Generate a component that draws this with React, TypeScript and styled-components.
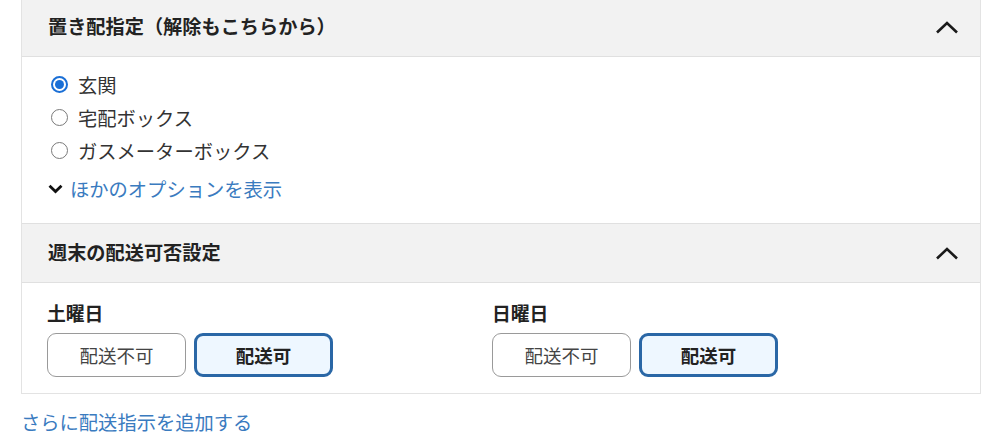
import React from "react";
import styled, { createGlobalStyle } from "styled-components";

const Global = createGlobalStyle`
  html, body { margin: 0; padding: 0; background: #fff; }
  body {
    font-family: "Noto Sans CJK JP", "Noto Sans", sans-serif;
    color: #333;
    overflow: hidden;
  }
`;

const Page = styled.div`
  width: 999px;
  height: 435px;
  padding-left: 21px;
  box-sizing: border-box;
  overflow: hidden;
`;

const Panel = styled.div`
  width: 960px;
  box-sizing: border-box;
  margin-top: -3px;
  border: 1px solid #e3e3e3;
  background: #fff;
`;

const Header = styled.div<{ $top?: boolean }>`
  height: 58px;
  display: flex;
  align-items: center;
  justify-content: space-between;
  background: #f2f2f2;
  padding: 0 21px 0 26px;
  border-top: ${(p) => (p.$top ? "none" : "1px solid #e0e0e0")};
  border-bottom: 1px solid #e0e0e0;
`;

const HeaderTitle = styled.div`
  font-size: 19.2px;
  font-weight: 700;
  color: #222;
  line-height: 24px;
  margin-top: -3px;
`;

const Chevron = styled.svg`
  width: 24px;
  height: 14px;
  display: block;
`;

const Body = styled.div`
  padding: 11px 26px 18px 26px;
`;

const RadioRow = styled.label`
  height: 33px;
  display: flex;
  align-items: center;
  font-size: 19.3px;
  color: #333;
  cursor: pointer;
`;

const RadioCircle = styled.span<{ $checked?: boolean }>`
  flex: 0 0 auto;
  width: 17px;
  height: 17px;
  box-sizing: border-box;
  border-radius: 50%;
  margin: 0 10px 0 3px;
  border: ${(p) => (p.$checked ? "2px solid #1a6fd6" : "1.5px solid #7a7a7a")};
  display: flex;
  align-items: center;
  justify-content: center;
  &::after {
    content: "";
    display: ${(p) => (p.$checked ? "block" : "none")};
    width: 9px;
    height: 9px;
    border-radius: 50%;
    background: #1a6fd6;
  }
`;

const MoreRow = styled.div`
  height: 33px;
  margin-top: 5px;
  display: flex;
  align-items: center;
  font-size: 19.3px;
`;

const SmallChevron = styled.svg`
  flex: 0 0 auto;
  width: 15px;
  height: 10px;
  margin-right: 7px;
  display: block;
`;

const LinkText = styled.a`
  color: #3a7bbf;
  text-decoration: none;
  cursor: pointer;
`;

const WeekendBody = styled.div`
  padding: 18px 26px 16px 25px;
  display: grid;
  grid-template-columns: 445px 445px;
`;

const DayColumn = styled.div`
  display: flex;
  flex-direction: column;
  gap: 8px;
`;

const DayLabel = styled.div`
  font-size: 18.8px;
  font-weight: 700;
  color: #222;
  line-height: 24px;
`;

const ButtonRow = styled.div`
  display: flex;
  gap: 8px;
`;

const Toggle = styled.button<{ $active?: boolean }>`
  width: 139px;
  height: 44px;
  box-sizing: border-box;
  border-radius: 9px;
  font-family: "Noto Sans CJK JP", "Noto Sans", sans-serif;
  font-size: 18.5px;
  font-weight: ${(p) => (p.$active ? 700 : 400)};
  color: ${(p) => (p.$active ? "#222" : "#444")};
  background: ${(p) => (p.$active ? "#eef7ff" : "#fff")};
  border: ${(p) => (p.$active ? "3px solid #2a67a6" : "1px solid #9a9a9a")};
  cursor: pointer;
  padding: 0;
`;

const AddLink = styled.a`
  display: block;
  margin-top: 16px;
  font-size: 19.3px;
  line-height: 24px;
  color: #3a7bbf;
  text-decoration: none;
`;

const UpIcon = () => (
  <Chevron viewBox="0 0 24 14">
    <path d="M2 12.5 L12 3 L22 12.5" fill="none" stroke="#1a1a1a" strokeWidth="2.6" strokeLinejoin="miter" />
  </Chevron>
);

const days = [{ name: "土曜日" }, { name: "日曜日" }];

const options = [
  { label: "玄関", checked: true },
  { label: "宅配ボックス", checked: false },
  { label: "ガスメーターボックス", checked: false },
];

export default function App() {
  return (
    <>
      <Global />
      <Page>
        <Panel>
          <Header $top>
            <HeaderTitle>置き配指定（解除もこちらから）</HeaderTitle>
            <UpIcon />
          </Header>
          <Body>
            {options.map((o) => (
              <RadioRow key={o.label}>
                <RadioCircle $checked={o.checked} />
                {o.label}
              </RadioRow>
            ))}
            <MoreRow>
              <SmallChevron viewBox="0 0 15 10">
                <path d="M1.5 1.8 L7.5 7.6 L13.5 1.8" fill="none" stroke="#111" strokeWidth="2.8" />
              </SmallChevron>
              <LinkText>ほかのオプションを表示</LinkText>
            </MoreRow>
          </Body>
          <Header>
            <HeaderTitle>週末の配送可否設定</HeaderTitle>
            <UpIcon />
          </Header>
          <WeekendBody>
            {days.map((d) => (
              <DayColumn key={d.name}>
                <DayLabel>{d.name}</DayLabel>
                <ButtonRow>
                  <Toggle>配送不可</Toggle>
                  <Toggle $active>配送可</Toggle>
                </ButtonRow>
              </DayColumn>
            ))}
          </WeekendBody>
        </Panel>
        <AddLink>さらに配送指示を追加する</AddLink>
      </Page>
    </>
  );
}
